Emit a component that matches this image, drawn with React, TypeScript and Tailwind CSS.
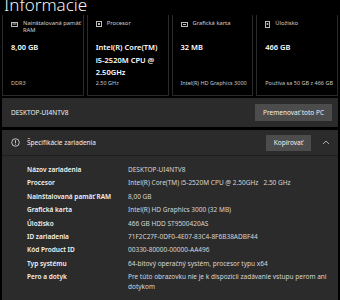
import { useState } from 'react'

const cards = [
  { title: 'Nainštalovaná pamäť\nRAM', value: '8,00 GB', foot: 'DDR3', icon: 'ram' },
  { title: 'Procesor', value: 'Intel(R) Core(TM) i5-2520M CPU @ 2.50GHz', foot: '2.50 GHz', icon: 'cpu' },
  { title: 'Grafická karta', value: '32 MB', foot: 'Intel(R) HD Graphics 3000', icon: 'gpu' },
  { title: 'Úložisko', value: '466 GB', foot: 'Používa sa 50 GB z 466 GB', icon: 'disk' },
]

const specs = [
  ['Názov zariadenia', 'DESKTOP-UI4NTV8'],
  ['Procesor', 'Intel(R) Core(TM) i5-2520M CPU @ 2.50GHz   2.50 GHz'],
  ['Nainštalovaná pamäť RAM', '8,00 GB'],
  ['Grafická karta', 'Intel(R) HD Graphics 3000 (32 MB)'],
  ['Úložisko', '466 GB HDD ST9500420AS'],
  ['ID zariadenia', '71F2C27F-0DF0-4E07-83C4-8F6B38ADBF44'],
  ['Kód Product ID', '00330-80000-00000-AA496'],
  ['Typ systému', '64-bitový operačný systém, procesor typu x64'],
  ['Pero a dotyk', 'Pre túto obrazovku nie je k dispozícii zadávanie vstupu perom ani dotykom'],
]

const CardIcon = ({ kind }: { kind: string }) => {
  if (kind === 'ram')
    return (
      <svg width="7" height="5" viewBox="0 0 7 5" className="mt-[2px] shrink-0">
        <rect x="0.5" y="0.5" width="6" height="4" fill="none" stroke="#bbb" strokeWidth="1" />
        <rect x="1.5" y="1.5" width="4" height="1" fill="#bbb" />
      </svg>
    )
  if (kind === 'cpu')
    return (
      <svg width="6" height="6" viewBox="0 0 6 6" className="mt-[1px] shrink-0">
        <rect x="0.5" y="0.5" width="5" height="5" fill="none" stroke="#bbb" strokeWidth="1" />
        <rect x="2" y="2" width="2" height="2" fill="#bbb" />
      </svg>
    )
  if (kind === 'gpu')
    return (
      <svg width="7" height="5" viewBox="0 0 7 5" className="mt-[2px] shrink-0">
        <rect x="0.5" y="0.5" width="6" height="4" fill="none" stroke="#bbb" strokeWidth="1" />
        <rect x="2" y="2" width="3" height="1" fill="#bbb" />
      </svg>
    )
  return (
    <svg width="5" height="7" viewBox="0 0 5 7" className="mt-[1px] shrink-0">
      <rect x="0.5" y="0.5" width="4" height="6" fill="none" stroke="#bbb" strokeWidth="1" />
      <circle cx="2.5" cy="3" r="1" fill="#bbb" />
    </svg>
  )
}

export default function App() {
  const [open] = useState(true)

  return (
    <div className="w-[340px] h-[300px] overflow-hidden bg-black text-white font-['Noto_Sans',sans-serif]">
      <h1 className="-mt-[6px] pl-[4px] text-[17px] font-light leading-[21px] text-[#f2f2f2]">Informacie</h1>

      <div className="grid grid-cols-4 gap-[3px] px-[2px] h-[81px]">
        {cards.map(c => (
          <div key={c.icon} className="flex flex-col border border-t-0 border-[#2a2a2a] pl-[8px] pr-[4px] pt-[5px] pb-[8px]">
            <div className="flex gap-[5px] items-start h-[18px]">
              <CardIcon kind={c.icon} />
              <p className="whitespace-pre text-[5.8px] leading-[7px] text-[#d0d0d0]">{c.title}</p>
            </div>
            <p className="mt-[3px] text-[7.5px] font-semibold leading-[12.5px] text-white">{c.value}</p>
            <p className="mt-auto text-[5.5px] leading-[7px] text-[#c8c8c8] whitespace-nowrap">{c.foot}</p>
          </div>
        ))}
      </div>

      <div className="mt-[2px] mx-[2px] bg-[#2b2b2b] h-[29px] flex items-center justify-between pl-[9px] pr-[6px]">
        <p className="text-[6.5px] text-[#f0f0f0]">DESKTOP-UI4NTV8</p>
        <button className="bg-[#4c4c4c] text-[6.5px] text-[#f0f0f0] px-[8px] h-[17px]">Premenovať toto PC</button>
      </div>

      <div className="mt-[3px] mx-[2px] bg-[#2b2b2b]">
        <div className="h-[26px] flex items-center pl-[9px] pr-[6px] border-b border-[#1f1f1f]">
          <svg width="9" height="9" viewBox="0 0 10 10" className="shrink-0">
            <circle cx="5" cy="5" r="4.2" fill="none" stroke="#e6e6e6" strokeWidth="0.9" />
            <rect x="4.55" y="2.4" width="0.9" height="3.4" fill="#e6e6e6" />
            <rect x="4.55" y="6.5" width="0.9" height="0.9" fill="#e6e6e6" />
          </svg>
          <p className="ml-[7px] text-[6.5px] text-[#f0f0f0] flex-1">Špecifikácie zariadenia</p>
          <button className="bg-[#4c4c4c] text-[6.5px] text-[#f0f0f0] px-[8px] h-[16px]">Kopírovať</button>
          <svg width="8" height="5" viewBox="0 0 8 5" className="ml-[11px] mr-[2px]">
            <path d="M1 4 L4 1 L7 4" fill="none" stroke="#bbb" strokeWidth="0.9" />
          </svg>
        </div>

        {open && (
          <div className="pt-[9px] pb-[20px] pl-[25px] pr-[6px] flex flex-col gap-[4px]">
            {specs.map(([k, v]) => (
              <div key={k} className="flex text-[6.5px] leading-[9.4px]">
                <p className="w-[101px] shrink-0 font-semibold text-[#f4f4f4]">{k}</p>
                <p className="text-[#d6d6d6] whitespace-pre-wrap">{v}</p>
              </div>
            ))}
          </div>
        )}
      </div>
    </div>
  )
}
